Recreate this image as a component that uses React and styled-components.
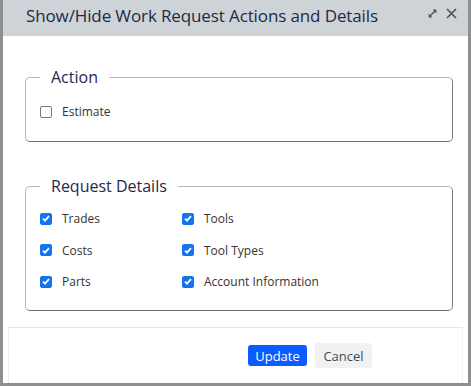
import React, { useState } from "react";
import styled, { createGlobalStyle } from "styled-components";

const GlobalStyle = createGlobalStyle`
  html, body {
    margin: 0;
    padding: 0;
    background: #fff;
  }
  body {
    font-family: "Open Sans", "Liberation Sans", sans-serif;
  }
`;

const Dialog = styled.div`
  width: 471px;
  height: 386px;
  box-sizing: border-box;
  border: 3px solid #8d8f91;
  border-top: none;
  display: flex;
  flex-direction: column;
  background: #fff;
`;

const Header = styled.div`
  height: 36px;
  flex-shrink: 0;
  background: #ced3d8;
  display: flex;
  align-items: flex-start;
  justify-content: space-between;
  padding: 0 11px 0 23px;
`;

const Title = styled.h1`
  margin: 0;
  font-size: 17px;
  font-weight: 400;
  line-height: 32px;
  color: #1d2a47;
  letter-spacing: -0.12px;
`;

const HeaderTools = styled.div`
  display: flex;
  align-items: center;
  gap: 9px;
  padding-top: 8px;
`;

const ToolButton = styled.button`
  border: none;
  background: none;
  padding: 0;
  display: flex;
  cursor: pointer;
  color: #4d5156;
`;

const Body = styled.div`
  flex: 1;
  padding: 30px 15px 0 22px;
  display: flex;
  flex-direction: column;
  gap: 33px;
`;

const Fieldset = styled.fieldset`
  margin: 0;
  padding: 0 14px;
  border: 1px solid #b8b8b8;
  border-right-color: #7c7c7c;
  border-bottom-color: #6f6f6f;
  border-radius: 5px;
  min-height: ${({ $height }) => $height}px;
  box-sizing: border-box;
`;

const Legend = styled.legend`
  padding: 0 11px;
  font-size: 16px;
  line-height: 22px;
  color: #27284a;
`;

const OptionGrid = styled.div`
  display: grid;
  grid-template-columns: 142px 1fr;
  grid-auto-rows: 31.5px;
  padding-top: ${({ $top }) => $top}px;
`;

const Option = styled.label`
  display: flex;
  align-items: center;
  gap: 10px;
  font-size: 12px;
  color: #333;
  cursor: pointer;
`;

const Box = styled.span`
  width: 12px;
  height: 12px;
  box-sizing: border-box;
  border-radius: 2px;
  display: flex;
  align-items: center;
  justify-content: center;
  border: 1px solid ${({ $checked }) => ($checked ? "#1474f0" : "#7a7a7a")};
  background: ${({ $checked }) => ($checked ? "#1474f0" : "#fff")};
`;

const Footer = styled.div`
  margin: 16px 5px 0;
  height: 56px;
  box-sizing: border-box;
  border: 1px solid #f0f0f0;
  border-top-color: #e6e6e6;
  border-bottom: none;
  display: flex;
  align-items: center;
  justify-content: flex-end;
  gap: 8px;
  padding: 0 90px 0 0;
`;

const Button = styled.button`
  font-family: "Open Sans", "Liberation Sans", sans-serif;
  font-size: 13px;
  border: none;
  border-radius: 3px;
  cursor: pointer;
  padding: 0;
  width: ${({ $primary }) => ($primary ? "59px" : "57px")};
  height: ${({ $primary }) => ($primary ? "21px" : "25px")};
  background: ${({ $primary }) => ($primary ? "#0a5cff" : "#f0f1f3")};
  color: ${({ $primary }) => ($primary ? "#fff" : "#4a4a4a")};
`;

const Check = ({ checked }) => (
  <Box $checked={checked}>
    {checked && (
      <svg width="8" height="7" viewBox="0 0 8 7">
        <path d="M1 3.6 L3 5.6 L7 1.2" fill="none" stroke="#fff" strokeWidth="1.8" />
      </svg>
    )}
  </Box>
);

const ExpandIcon = () => (
  <svg width="9" height="9" viewBox="0 0 9 9">
    <path d="M2 7 L7 2" stroke="currentColor" strokeWidth="1.4" />
    <path d="M4.6 0.6 L8.4 0.6 L8.4 4.4 Z" fill="currentColor" />
    <path d="M0.6 4.6 L0.6 8.4 L4.4 8.4 Z" fill="currentColor" />
  </svg>
);

const CloseIcon = () => (
  <svg width="11" height="11" viewBox="0 0 11 11">
    <path d="M1 1 L10 10 M10 1 L1 10" stroke="currentColor" strokeWidth="1.6" />
  </svg>
);

const App = () => {
  const [estimate, setEstimate] = useState(false);
  const [details, setDetails] = useState({
    Trades: true,
    Tools: true,
    Costs: true,
    "Tool Types": true,
    Parts: true,
    "Account Information": true,
  });

  const toggle = (key) => setDetails({ ...details, [key]: !details[key] });

  return (
    <>
      <GlobalStyle />
      <Dialog>
        <Header>
          <Title>Show/Hide Work Request Actions and Details</Title>
          <HeaderTools>
            <ToolButton aria-label="Maximize">
              <ExpandIcon />
            </ToolButton>
            <ToolButton aria-label="Close">
              <CloseIcon />
            </ToolButton>
          </HeaderTools>
        </Header>
        <Body>
          <Fieldset $height={76}>
            <Legend>Action</Legend>
            <OptionGrid $top={8}>
              <Option onClick={() => setEstimate(!estimate)}>
                <Check checked={estimate} />
                Estimate
              </Option>
            </OptionGrid>
          </Fieldset>
          <Fieldset $height={136}>
            <Legend>Request Details</Legend>
            <OptionGrid $top={6}>
              {Object.keys(details).map((key) => (
                <Option key={key} onClick={() => toggle(key)}>
                  <Check checked={details[key]} />
                  {key}
                </Option>
              ))}
            </OptionGrid>
          </Fieldset>
        </Body>
        <Footer>
          <Button $primary>Update</Button>
          <Button>Cancel</Button>
        </Footer>
      </Dialog>
    </>
  );
};

export default App;
